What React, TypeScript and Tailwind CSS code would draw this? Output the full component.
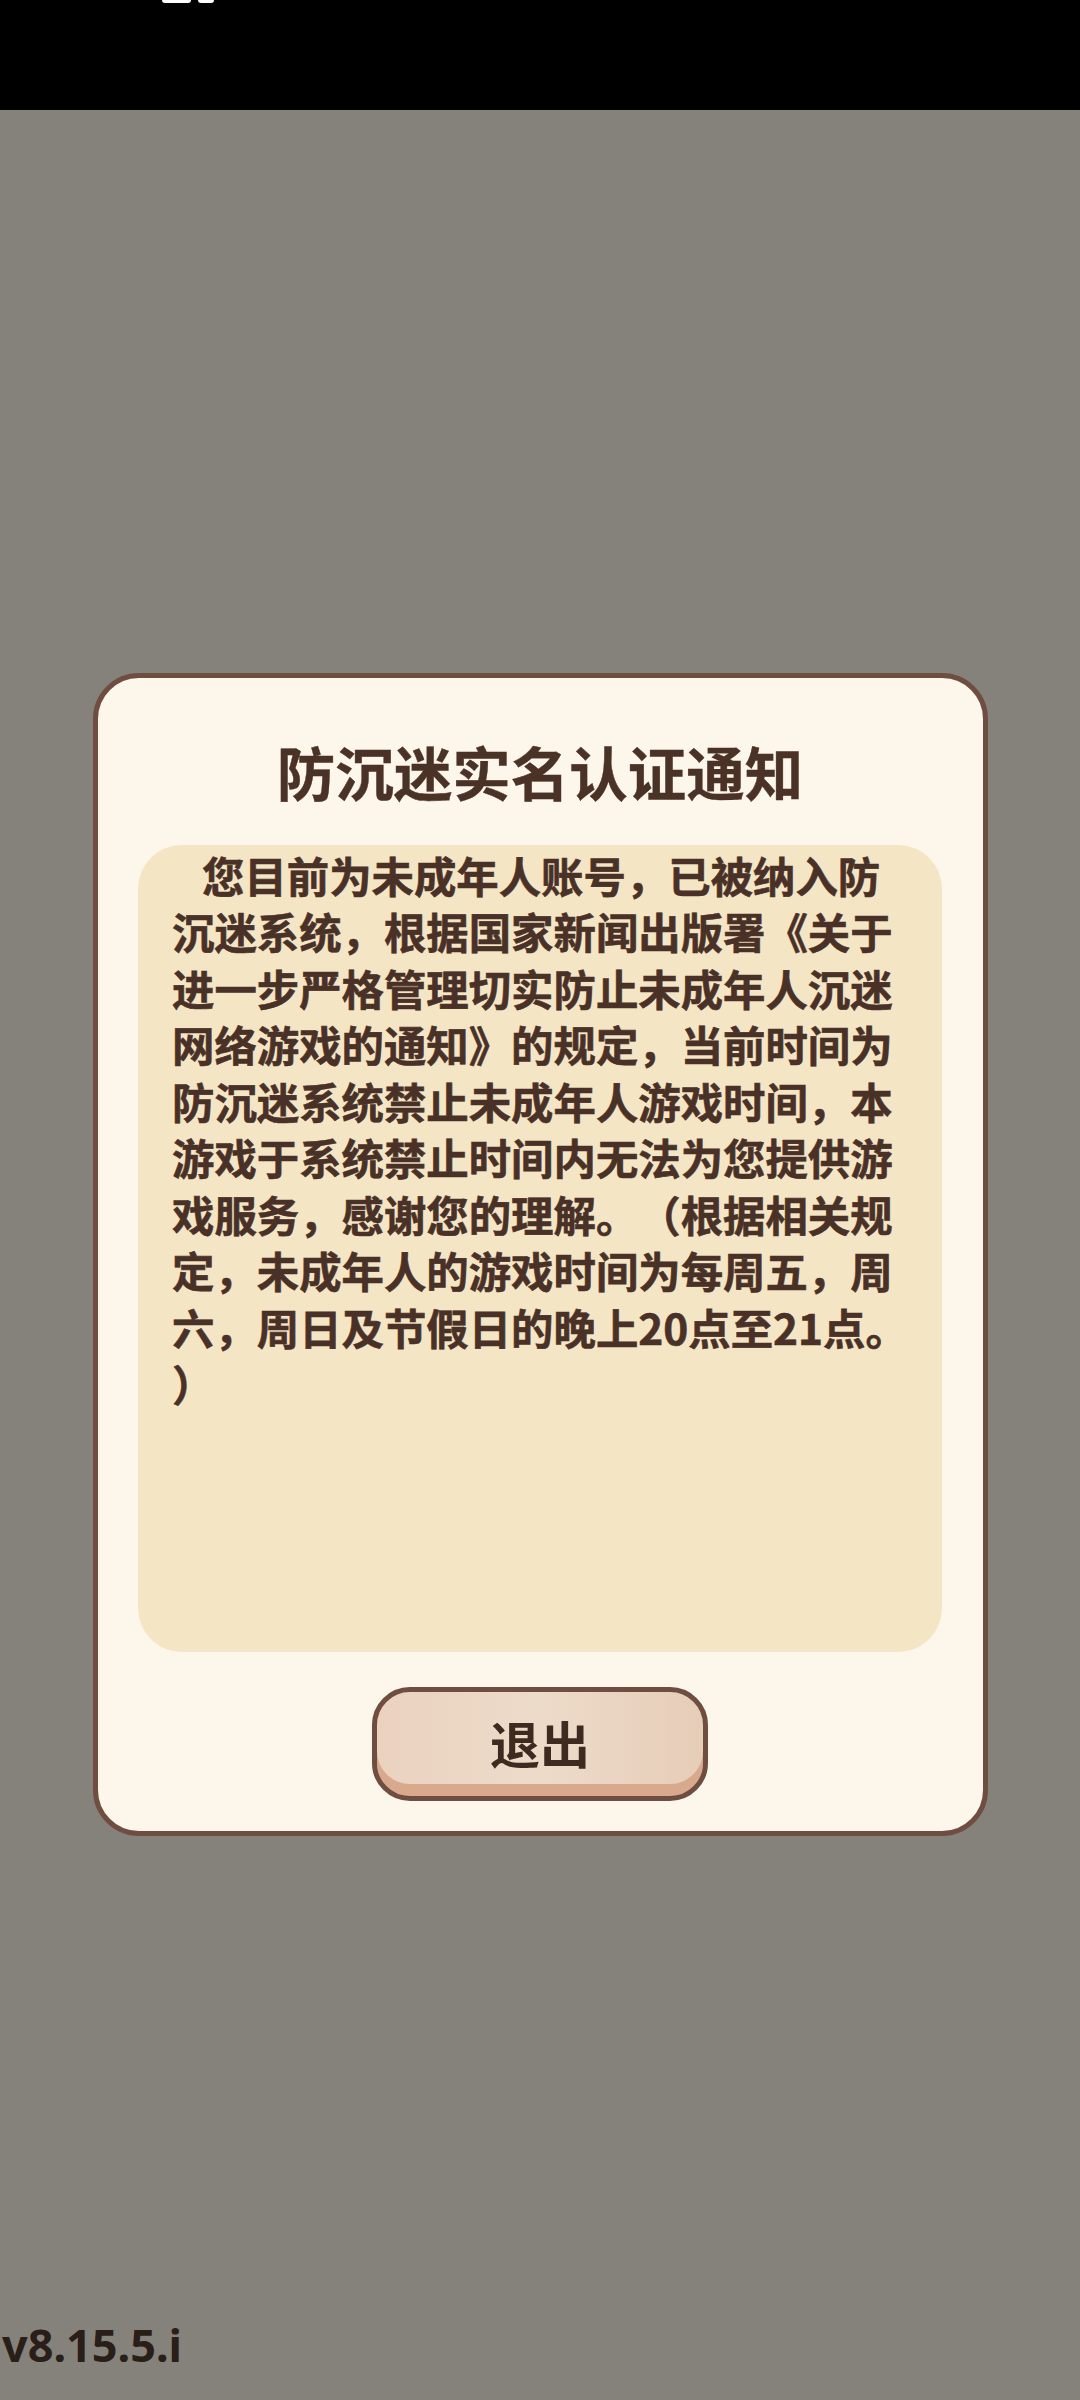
import React from 'react'

const lines = [
  '您目前为未成年人账号，已被纳入防',
  '沉迷系统，根据国家新闻出版署《关于',
  '进一步严格管理切实防止未成年人沉迷',
  '网络游戏的通知》的规定，当前时间为',
  '防沉迷系统禁止未成年人游戏时间，本',
  '游戏于系统禁止时间内无法为您提供游',
  '戏服务，感谢您的理解。（根据相关规',
  '定，未成年人的游戏时间为每周五，周',
  '六，周日及节假日的晚上20点至21点。',
  '）',
]

export default function App() {
  return (
    <div
      className="flex h-[2400px] w-[1080px] flex-col overflow-hidden bg-[#85827b]"
      style={{ fontFamily: '"Noto Sans", "Noto Sans CJK SC", sans-serif' }}
    >
      {/* status bar */}
      <div className="flex h-[110px] shrink-0 items-start gap-[7px] bg-black pl-[162px]">
        <div className="h-[3px] w-[29px] rounded-b-sm bg-white" />
        <div className="h-[3px] w-[16px] rounded-b-sm bg-white" />
      </div>

      {/* dialog */}
      <div className="mx-auto mt-[563px] flex w-[895px] flex-col items-center rounded-[46px] border-[5px] border-[#6f4d40] bg-[#fdf6eb] pt-[64px] pb-[30px]">
        <h1
          className="text-[58.5px] leading-none font-bold text-[#4b3227] [-webkit-text-stroke:0.4px_#4b3227]"
          style={{ fontFamily: '"Noto Sans CJK SC", sans-serif' }}
        >
          防沉迷实名认证通知
        </h1>

        <div
          className="mt-[44px] h-[807px] w-[804px] rounded-[44px] bg-[#f4e5c5] pt-[2px] pl-[34px] text-[42.4px] leading-[56.5px] font-bold text-[#4a3128] [text-spacing-trim:space-all] [-webkit-text-stroke:0.6px_#4a3128]"
          style={{ fontFamily: '"Noto Sans CJK SC", sans-serif' }}
        >
          {lines.map((line, i) => (
            <div key={i} className={`whitespace-nowrap ${i === 0 ? 'pl-[30px]' : ''}`}>
              {line}
            </div>
          ))}
        </div>

        <button
          className="mt-[35px] flex h-[114px] w-[336px] items-center justify-center rounded-[38px] border-[5px] border-[#6f4d40] bg-gradient-to-r from-[#ead2bf] via-[#eddbc9] to-[#e6cdb8] pb-[4px] text-[50px] leading-none font-bold text-[#3f2a21] shadow-[inset_0_-12px_0_#d8a98c]"
          style={{ fontFamily: '"Noto Sans CJK SC", sans-serif' }}
        >
          退出
        </button>
      </div>

      {/* version */}
      <div className="mt-auto pb-[33px] pl-[2px] text-[45px] leading-none font-bold text-[#2a1e19]">
        v8.15.5.i
      </div>
    </div>
  )
}
